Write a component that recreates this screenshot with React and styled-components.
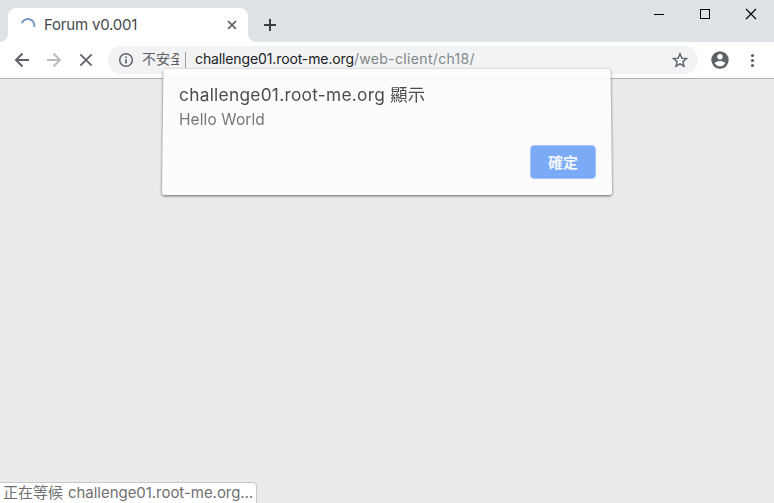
import React from 'react';
import styled, { createGlobalStyle } from 'styled-components';

const GlobalStyle = createGlobalStyle`
  * { box-sizing: border-box; }
  body { margin: 0; overflow: hidden; font-family: Inter, "Noto Sans CJK TC", sans-serif; }
`;

const Window = styled.div`
  position: relative;
  display: flex;
  flex-direction: column;
  width: 774px;
  height: 503px;
  background: #ebebeb;
  overflow: hidden;
`;

const TabStrip = styled.header`
  display: flex;
  height: 42px;
  padding: 8px 0 0 8px;
  background: #dee1e6;
`;

const Tab = styled.div`
  position: relative;
  display: flex;
  align-items: center;
  width: 240px;
  height: 34px;
  padding: 0 9px 0 12px;
  border-radius: 8px 8px 0 0;
  background: #fff;
  &::before, &::after {
    content: '';
    position: absolute;
    bottom: 0;
    width: 8px;
    height: 8px;
  }
  &::before { left: -8px; background: radial-gradient(circle at 0 0, transparent 7.5px, #fff 8px); }
  &::after { right: -8px; background: radial-gradient(circle at 100% 0, transparent 7.5px, #fff 8px); }
`;

const Text = styled.span`
  display: block;
  flex: none;
  white-space: nowrap;
  font-size: ${p => p.$size}px;
  line-height: ${p => p.$line || 20}px;
  letter-spacing: ${p => p.$track || 0}px;
  color: ${p => p.$color};
`;

const TabTitle = styled(Text)`
  flex: 1;
  margin-left: 8px;
`;

const Icon = styled.svg`
  display: block;
  flex: none;
  width: ${p => p.$w || 16}px;
  height: ${p => p.$w || 16}px;
  fill: none;
  stroke: ${p => p.$color || '#5f6368'};
  stroke-width: ${p => p.$stroke || 2};
`;

const SolidIcon = styled(Icon)`
  stroke: none;
`;

const NewTab = styled.div`
  padding: 9px 0 0 14px;
`;

const WindowControls = styled.div`
  display: flex;
  gap: 30px;
  margin: -2px 15px 0 auto;
`;

const Toolbar = styled.nav`
  display: flex;
  align-items: center;
  height: 37px;
  padding: 0 13px 0 14px;
  background: #fff;
  border-bottom: 1px solid #b0b1b3;
`;

const NavButtons = styled.div`
  display: flex;
  gap: 16px;
`;

const AddressBar = styled.div`
  display: flex;
  flex: none;
  align-items: center;
  width: 590px;
  height: 28px;
  margin-left: 14px;
  padding: 0 10px;
  border-radius: 14px;
  background: #f1f3f4;
`;

const Security = styled.div`
  width: 37px;
  margin: -2px 0 0 8px;
  overflow: hidden;
`;

const Divider = styled.i`
  width: 1px;
  height: 16px;
  margin: 0 9px 0 6px;
  background: #9a9da0;
`;

const UrlText = styled(Text)`
  margin-top: -2px;
`;

const AddressEnd = styled.div`
  margin-left: auto;
`;

const ToolbarEnd = styled.div`
  display: flex;
  gap: 14px;
  margin-left: auto;
`;

const Dialog = styled.section`
  position: absolute;
  left: 162px;
  top: 68px;
  width: 450px;
  height: 127px;
  padding: 17px 16px 16px 17px;
  display: flex;
  flex-direction: column;
  &::before {
    content: '';
    position: absolute;
    inset: 0;
    border-radius: 3px;
    background: linear-gradient(#fdfdfd 9px, #f6f6f6 9px, #f6f6f6 10px, #fcfcfc 10px);
    box-shadow: 0 1px 3px rgba(0, 0, 0, .6);
    transform: perspective(1000px) rotateX(3deg);
    transform-origin: 50% 100%;
  }
  & > * { position: relative; }
`;

const DialogTitle = styled(Text)`
  height: 23px;
`;

const Confirm = styled.button`
  align-self: flex-end;
  width: 66px;
  height: 34px;
  margin-top: auto;
  padding: 0;
  border: 1px solid #a6c4fa;
  border-radius: 4px;
  background: #7baaf7;
  color: #f1f6fe;
  font: 700 15px/30px "Noto Sans CJK TC", sans-serif;
`;

const Status = styled.footer`
  position: absolute;
  left: -1px;
  bottom: -1px;
  width: 258px;
  height: 22px;
  display: flex;
  padding: 0 0 0 3px;
  border: 1px solid #c8c8c8;
  border-radius: 0 4px 0 0;
  background: #fff;
`;

const StatusHost = styled(Text)`
  margin-left: 5px;
`;

export default function App() {
  return (
    <Window>
      <GlobalStyle />
      <TabStrip>
        <Tab>
          <Icon viewBox="0 0 16 16" $color="#7898c8"><path d="M1.8 6.2A6.5 6.5 0 0 1 14.2 10" /></Icon>
          <TabTitle $size={15} $track={-0.2} $color="#45494d">Forum v0.001</TabTitle>
          <Icon viewBox="0 0 16 16" $w={14} $stroke={1.9}><path d="M3.5 3.5l9 9M12.5 3.5l-9 9" /></Icon>
        </Tab>
        <NewTab><Icon viewBox="0 0 16 16" $color="#3c4043"><path d="M8 2v12M2 8h12" /></Icon></NewTab>
        <WindowControls>
          <Icon viewBox="0 0 16 16" $color="#000" $stroke={1} shapeRendering="crispEdges"><path d="M3 8.5h10" /></Icon>
          <Icon viewBox="0 0 16 16" $color="#000" $stroke={1} shapeRendering="crispEdges"><path d="M3.5 3.5h9v9h-9z" /></Icon>
          <Icon viewBox="0 0 16 16" $color="#000" $stroke={1.2}><path d="M3 3l10 10M13 3L3 13" /></Icon>
        </WindowControls>
      </TabStrip>
      <Toolbar>
        <NavButtons>
          <Icon viewBox="0 0 16 16"><path d="M15 8H2.5M8.5 1.5L2 8l6.5 6.5" /></Icon>
          <Icon viewBox="0 0 16 16" $color="#babcbe"><path d="M1 8h12.5M7.5 1.5L14 8l-6.5 6.5" /></Icon>
          <Icon viewBox="0 0 16 16" $stroke={1.8}><path d="M2.3 2.3l11.4 11.4M13.7 2.3L2.3 13.7" /></Icon>
        </NavButtons>
        <AddressBar>
          <Icon viewBox="0 0 16 16" $stroke={1.5}><circle cx="8" cy="8" r="6.3" /><path d="M8 7.2v4.3M8 4.5v1.6" strokeWidth="1.7" /></Icon>
          <Security><Text $size={14} $color="#5f6368">不安全</Text></Security>
          <Divider />
          <UrlText $size={14} $track={-0.12} $color="#202124">challenge01.root-me.org</UrlText>
          <UrlText $size={14} $track={0.33} $color="#80868b">/web-client/ch18/</UrlText>
          <AddressEnd>
            <Icon viewBox="0 0 16 16" $stroke={1.4}><path d="M8 1.8l1.8 4.3 4.7.4-3.6 3.1 1.1 4.6L8 11.8l-4 2.4 1.1-4.6-3.6-3.1 4.7-.4z" /></Icon>
          </AddressEnd>
        </AddressBar>
        <ToolbarEnd>
          <SolidIcon viewBox="0 0 18 18" $w={18}>
            <circle cx="9" cy="9" r="8.7" fill="#5f6368" />
            <circle cx="9" cy="5.8" r="2.7" fill="#fff" />
            <path d="M3.7 12.5C4 10.7 7.2 9.9 9 9.9s5 .8 5.3 2.6A6.3 6.3 0 0 1 9 15.2a6.3 6.3 0 0 1-5.3-2.7z" fill="#fff" />
          </SolidIcon>
          <SolidIcon viewBox="0 0 18 18" $w={18}>
            <g fill="#5f6368"><circle cx="9.5" cy="4.5" r="1.6" /><circle cx="9.5" cy="9.5" r="1.6" /><circle cx="9.5" cy="14.5" r="1.6" /></g>
          </SolidIcon>
        </ToolbarEnd>
      </Toolbar>
      <Dialog>
        <DialogTitle $size={17.3} $track={0.28} $color="#4b4c4f">challenge01.root-me.org 顯示</DialogTitle>
        <Text $size={15.5} $line={24} $track={0.1} $color="#77787b">Hello World</Text>
        <Confirm>確定</Confirm>
      </Dialog>
      <Status>
        <Text $size={15} $line={19} $color="#707070">正在等候</Text>
        <StatusHost $size={15} $line={19} $track={-0.04} $color="#707070">challenge01.root-me.org…</StatusHost>
      </Status>
    </Window>
  );
}
